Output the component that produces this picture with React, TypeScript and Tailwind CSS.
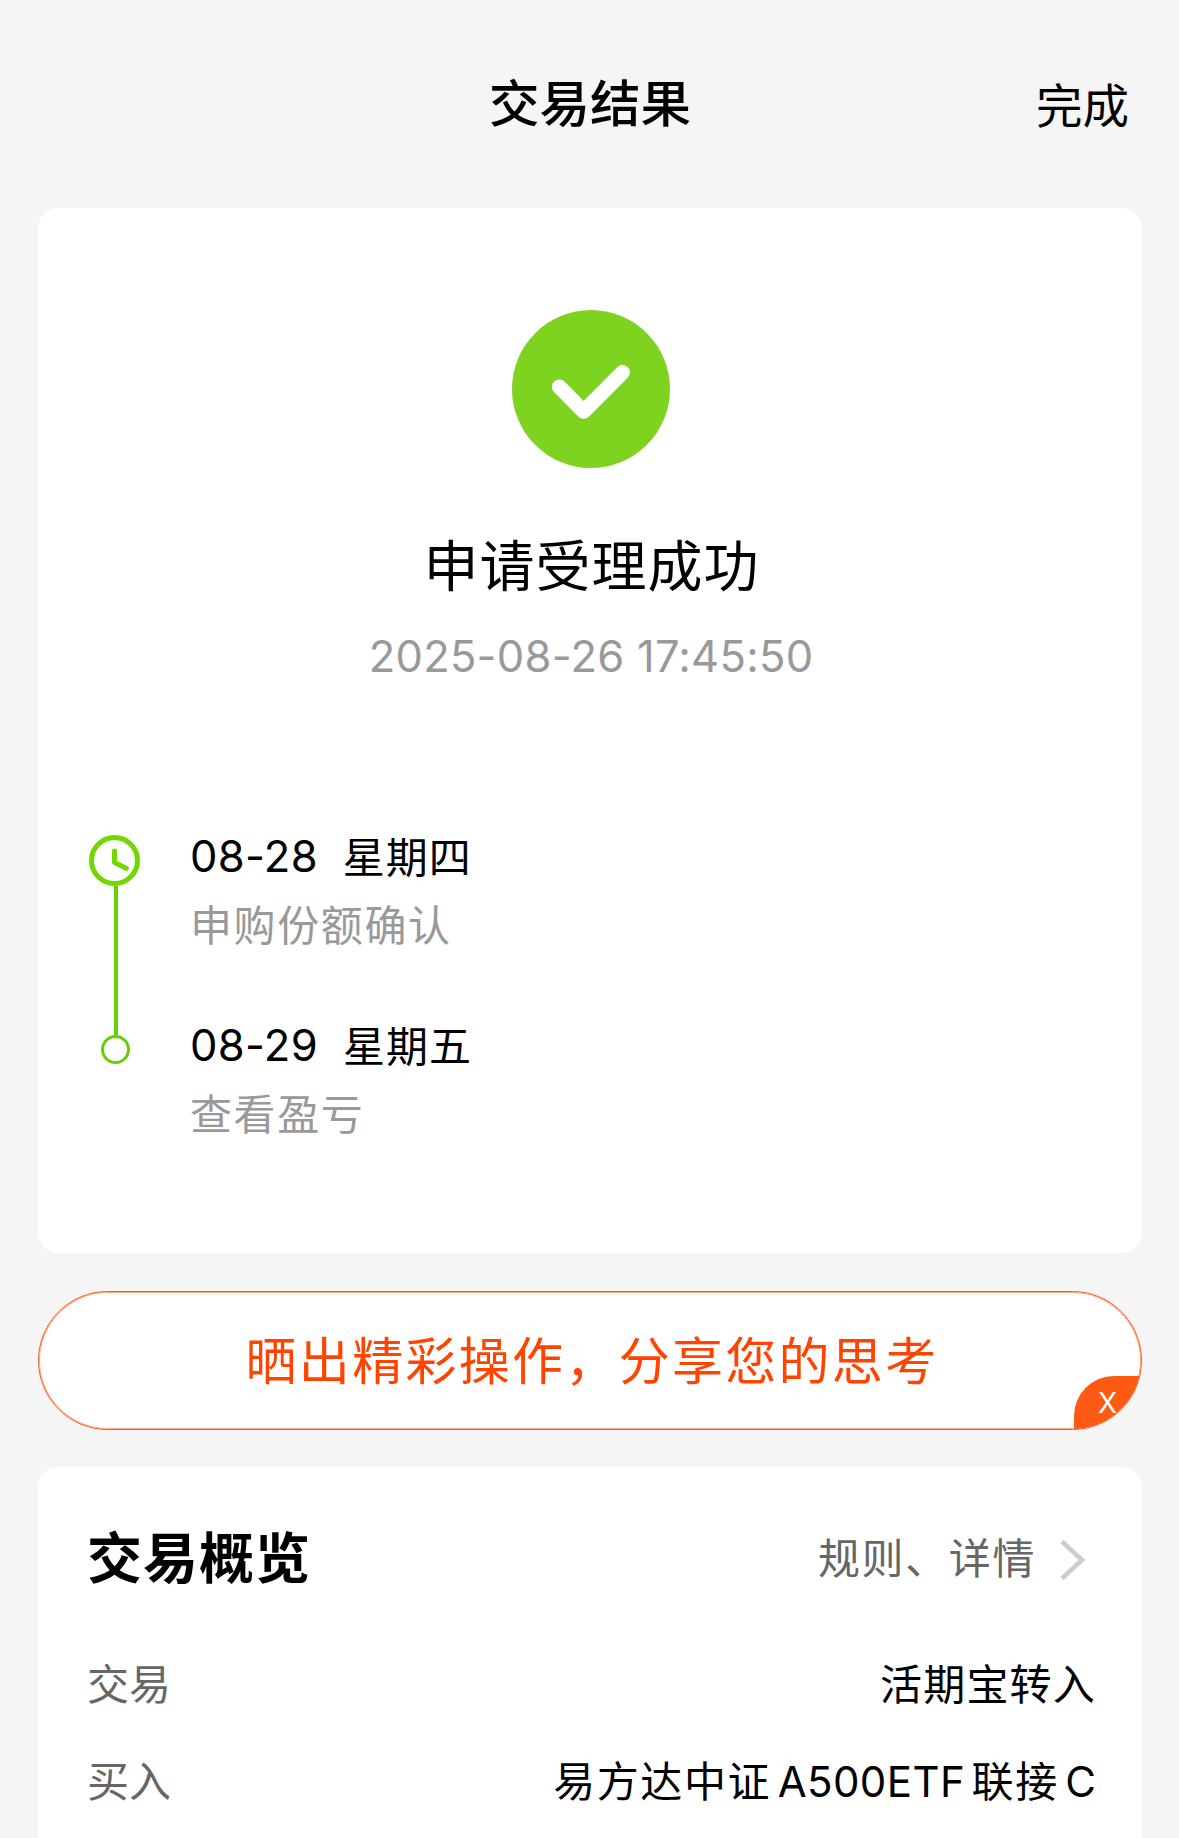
const steps = [
  { date: "08-28", day: "星期四", label: "申购份额确认" },
  { date: "08-29", day: "星期五", label: "查看盈亏" },
];

export default function App() {
  return (
    <main
      lang="zh-CN"
      className="flex h-[1838px] w-full flex-col overflow-hidden bg-[#f5f5f5] pr-[37px] pl-[38px] font-['Inter','Noto_Sans_CJK_SC',sans-serif] text-black"
    >
      {/* Header */}
      <header className="grid h-[208px] shrink-0 grid-cols-3 pt-[73px]">
        <h1 className="col-start-2 text-center text-[50.5px] leading-[62px] font-medium whitespace-nowrap">
          交易结果
        </h1>
        <button className="justify-self-end pt-[3px] pr-[13px] text-[46.5px] leading-[60px] self-start">
          完成
        </button>
      </header>

      {/* Result */}
      <section className="flex h-[1045px] shrink-0 flex-col items-center rounded-[20px] bg-white pt-[102px]">
        <svg width="158" height="158" viewBox="0 0 158 158" className="ml-[2px]">
          <circle cx="79" cy="79" r="79" fill="#7ed321" />
          <path
            d="M47.3 76.8 71.6 101.4 110.5 62.4"
            fill="none"
            stroke="#fff"
            strokeWidth="14.8"
            strokeLinecap="round"
            strokeLinejoin="round"
          />
        </svg>
        <h2 className="mt-[63px] ml-[3px] text-[55px] leading-[70px] tracking-[1px]">
          申请受理成功
        </h2>
        <p className="mt-[30px] ml-[2px] text-[43.5px] leading-[50px] tracking-[0.25px] text-[#999]">
          2025-08-26 17:45:50
        </p>

        {/* Timeline */}
        <div className="mt-[146px] flex w-full pl-[51px]">
          <div className="flex w-[52px] flex-col items-center pt-[8px]">
            <svg width="52" height="51" viewBox="0 0 52 51" fill="none">
              <circle cx="25.5" cy="25.5" r="23" stroke="#70d800" strokeWidth="5" />
              <path
                d="M25.5 16V27.5L37.5 33.5"
                stroke="#70d800"
                strokeWidth="5"
                strokeLinecap="round"
                strokeLinejoin="round"
              />
            </svg>
            <span className="ml-[2px] h-[149px] w-[4px] bg-[#66cf00]" />
            <span className="ml-[1px] size-[29px] rounded-full border-[3px] border-[#66cf00]" />
          </div>
          <ul className="ml-[49px] flex flex-col gap-[53px]">
            {steps.map((step) => (
              <li key={step.date} className="h-[136px]">
                <p className="flex gap-[25px] text-[43.5px] leading-[58px] tracking-[0.3px]">
                  <span>{step.date}</span>
                  <span className="pt-[2px] text-[42px] tracking-[1px]">{step.day}</span>
                </p>
                <p className="mt-[9px] text-[42px] leading-[60px] tracking-[1.6px] text-[#999]">
                  {step.label}
                </p>
              </li>
            ))}
          </ul>
        </div>
      </section>

      {/* Share banner */}
      <div className="relative mt-[38px] flex h-[139px] shrink-0 items-center justify-center overflow-hidden rounded-full border border-[#fd5b13] bg-white shadow-[inset_0_0_0_1px_#fdad8a]">
        <span className="mt-[4px] ml-[4px] text-[51px] tracking-[2.3px] text-[#ff4400]">
          晒出精彩操作，分享您的思考
        </span>
        <button className="absolute right-0 bottom-0 h-[53px] w-[67px] rounded-tl-[40px] bg-[#fd5b13] text-[28px] leading-[50px] text-white">
          X
        </button>
      </div>

      {/* Overview */}
      <section className="mt-[37px] h-[400px] shrink-0 rounded-t-[20px] bg-white pr-[46px] pl-[49px]">
        <div className="flex h-[188px] items-center justify-between pb-[5px]">
          <h2 className="text-[55px] font-bold tracking-[1px]">交易概览</h2>
          <a className="flex items-center pr-[9px] text-[42px] tracking-[1.6px] text-[#666]">
            规则、详情
            <svg width="28" height="44" viewBox="0 0 28 44" className="mt-[3px] ml-[23px]">
              <path d="M3 3.5 23 22 3 40.5" fill="none" stroke="#ccc" strokeWidth="4.5" />
            </svg>
          </a>
        </div>
        <dl className="flex flex-col gap-[37px] text-[42px] leading-[60px]">
          <div className="flex justify-between">
            <dt className="text-[#666]">交易</dt>
            <dd className="tracking-[1.2px]">活期宝转入</dd>
          </div>
          <div className="flex justify-between">
            <dt className="text-[#666]">买入</dt>
            <dd className="flex gap-[6.5px]">
              <span className="tracking-[1.6px]">易方达中证</span>
              <span className="tracking-[0.4px]">A500ETF</span>
              <span className="tracking-[1.6px]">联接</span>
              <span>C</span>
            </dd>
          </div>
        </dl>
      </section>
    </main>
  );
}
